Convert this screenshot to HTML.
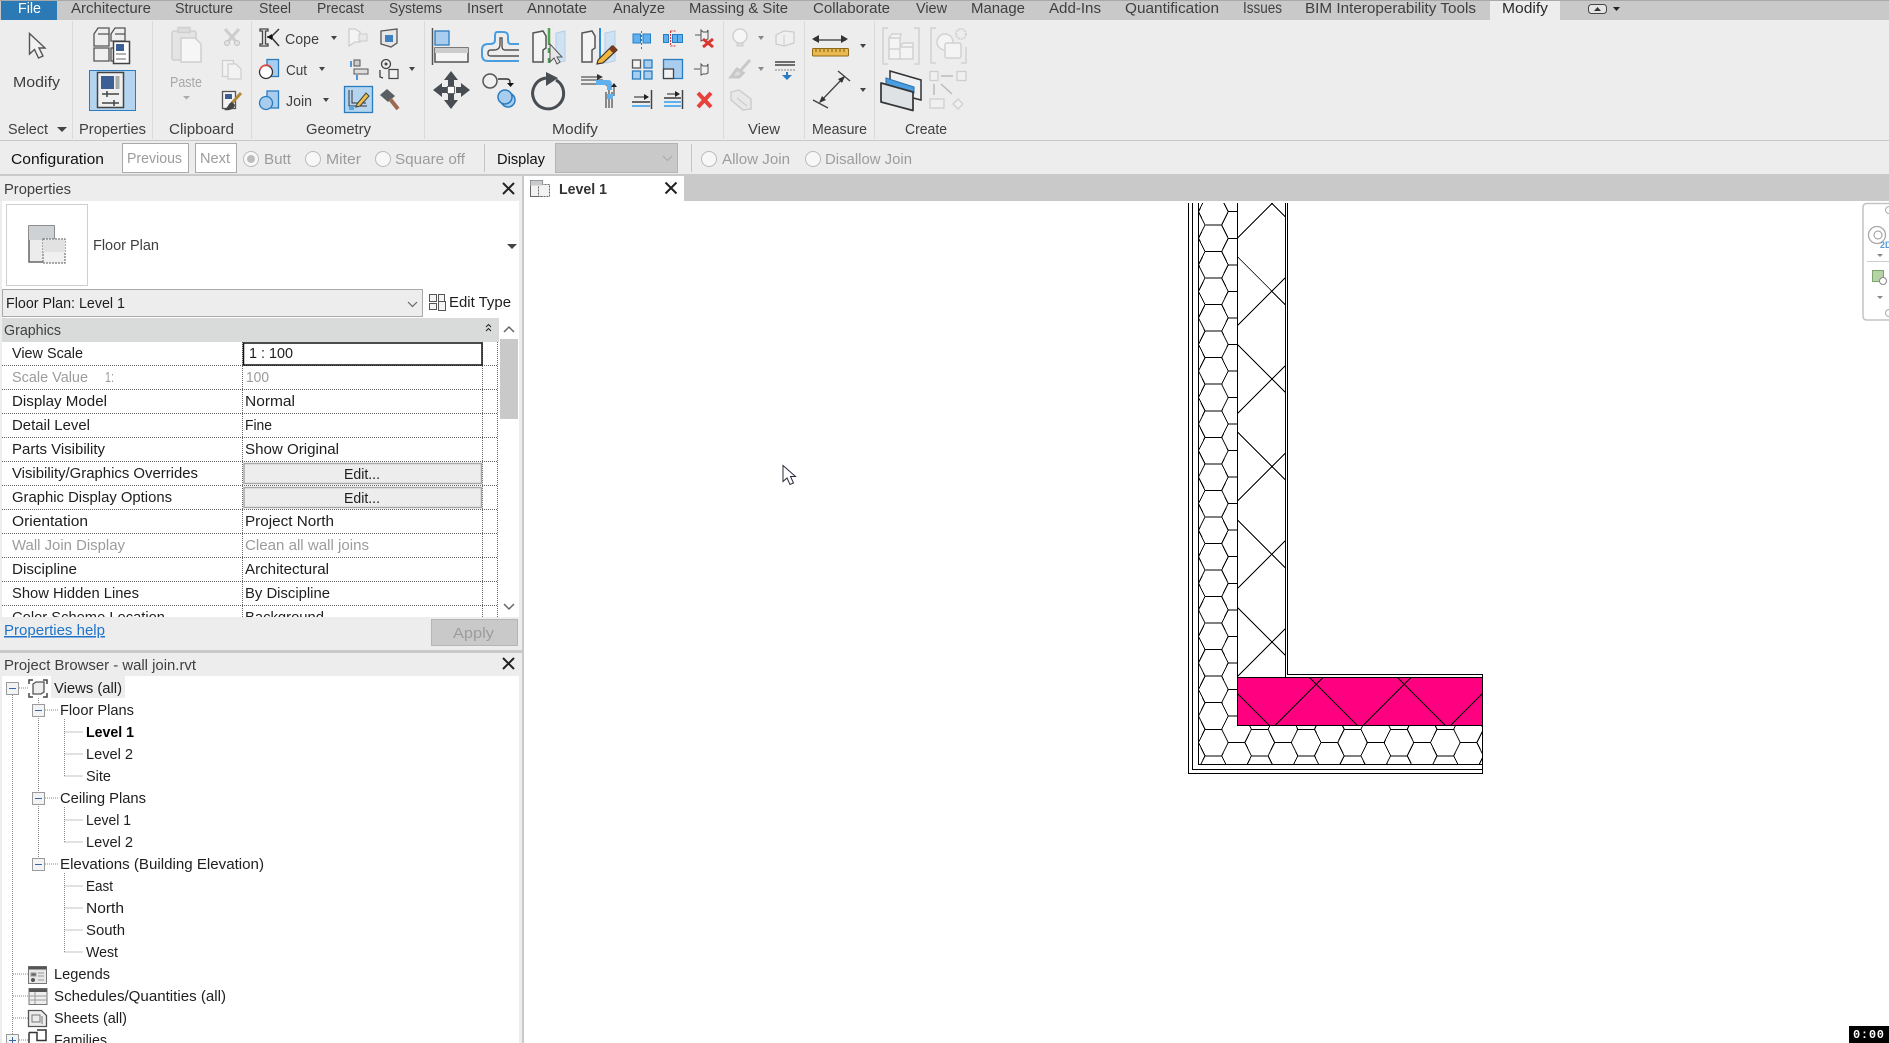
<!DOCTYPE html>
<html><head><meta charset="utf-8"><title>Revit</title>
<style>
html,body{margin:0;padding:0;background:#fff;overflow:hidden}
svg{display:block}
text{font-family:"Liberation Sans",Arial,sans-serif;font-size:15px;fill:#1e1e1e}
.t{fill:#3f3f3f}
.g{fill:#9c9c9c}
.d{fill:#a8a8a8}
.dot{stroke:#666;stroke-dasharray:1 1;stroke-width:1;shape-rendering:crispEdges;fill:none}
.tree{stroke:#888;stroke-dasharray:1 1;stroke-width:1;shape-rendering:crispEdges;fill:none}
.c{shape-rendering:crispEdges}
</style></head><body>
<svg width="1889" height="1043" viewBox="0 0 1889 1043" xmlns="http://www.w3.org/2000/svg">
<defs>
<clipPath id="hc"><path d="M1198.5 203H1237.5V725.3H1482V764.3H1198.5Z"/></clipPath>
<clipPath id="xc"><rect x="1237.5" y="203" width="48" height="474.3"/></clipPath>
<path id="tile" d="M0 0H16.7L23.2 13.27L16.7 26.54M23.2 13.27H39.9L46.4 0M39.9 13.27L46.4 26.54"/>
<g id="col">
<use href="#tile" y="171.92"/><use href="#tile" y="198.46"/><use href="#tile" y="225"/><use href="#tile" y="251.54"/><use href="#tile" y="278.08"/><use href="#tile" y="304.62"/><use href="#tile" y="331.16"/><use href="#tile" y="357.7"/><use href="#tile" y="384.24"/><use href="#tile" y="410.78"/><use href="#tile" y="437.32"/><use href="#tile" y="463.86"/><use href="#tile" y="490.4"/><use href="#tile" y="516.94"/><use href="#tile" y="543.48"/><use href="#tile" y="570.02"/><use href="#tile" y="596.56"/><use href="#tile" y="623.1"/><use href="#tile" y="649.64"/><use href="#tile" y="676.18"/><use href="#tile" y="702.72"/><use href="#tile" y="729.26"/><use href="#tile" y="755.8"/>
</g>
</defs>

<!-- base -->
<rect width="1889" height="1043" fill="#fff"/>
<rect y="0" width="1889" height="20" fill="#c9c9c9"/>
<rect y="0" width="1889" height="1" fill="#a9a9a9"/>
<rect x="1" y="1" width="56" height="19" fill="#2b7ab5"/>
<rect x="1490" y="1" width="70" height="19" fill="#ededed"/>
<rect y="20" width="1889" height="120" fill="#ededed"/>
<rect y="140" width="1889" height="1" fill="#c9c9c9"/>
<rect y="141" width="1889" height="33" fill="#ededed"/>
<rect y="174" width="1889" height="27" fill="#c9c9c9"/>
<rect x="0" y="176" width="522" height="867" fill="#ededed"/>
<rect x="522" y="176" width="2" height="867" fill="#c9c9c9"/>
<rect x="524" y="176" width="160" height="25" fill="#fff"/>

<!-- ribbon tabs -->
<g class="t">
<text x="18" y="13" textLength="23" lengthAdjust="spacingAndGlyphs" style="fill:#fff">File</text>
<text class="t" x="71" y="13" textLength="80" lengthAdjust="spacingAndGlyphs">Architecture</text>
<text class="t" x="175" y="13" textLength="58" lengthAdjust="spacingAndGlyphs">Structure</text>
<text class="t" x="259" y="13" textLength="32" lengthAdjust="spacingAndGlyphs">Steel</text>
<text class="t" x="317" y="13" textLength="47" lengthAdjust="spacingAndGlyphs">Precast</text>
<text class="t" x="389" y="13" textLength="53" lengthAdjust="spacingAndGlyphs">Systems</text>
<text class="t" x="467" y="13" textLength="36" lengthAdjust="spacingAndGlyphs">Insert</text>
<text class="t" x="527" y="13" textLength="60" lengthAdjust="spacingAndGlyphs">Annotate</text>
<text class="t" x="613" y="13" textLength="52" lengthAdjust="spacingAndGlyphs">Analyze</text>
<text class="t" x="689" y="13" textLength="99" lengthAdjust="spacingAndGlyphs">Massing &amp; Site</text>
<text class="t" x="813" y="13" textLength="77" lengthAdjust="spacingAndGlyphs">Collaborate</text>
<text class="t" x="916" y="13" textLength="31" lengthAdjust="spacingAndGlyphs">View</text>
<text class="t" x="971" y="13" textLength="54" lengthAdjust="spacingAndGlyphs">Manage</text>
<text class="t" x="1049" y="13" textLength="52" lengthAdjust="spacingAndGlyphs">Add-Ins</text>
<text class="t" x="1125" y="13" textLength="94" lengthAdjust="spacingAndGlyphs">Quantification</text>
<text class="t" x="1243" y="13" textLength="39" lengthAdjust="spacingAndGlyphs" style="font-size:16px">Issues</text>
<text class="t" x="1305" y="13" textLength="171" lengthAdjust="spacingAndGlyphs">BIM Interoperability Tools</text>
<text x="1502" y="13" textLength="46" lengthAdjust="spacingAndGlyphs" style="fill:#2a2a2a">Modify</text>
</g>
<rect x="1588.5" y="4.5" width="18" height="9" rx="3" fill="#e4e4e4" stroke="#444"/>
<path d="M1594 11l3.5-4 3.5 4z" fill="#333"/>
<path d="M1613 7h7l-3.5 4z" fill="#222"/>

<!-- panel separators -->
<g fill="#dadada" class="c">
<rect x="72" y="21" width="1" height="118"/><rect x="152" y="21" width="1" height="118"/><rect x="251" y="21" width="1" height="118"/><rect x="424" y="21" width="1" height="118"/><rect x="723" y="21" width="1" height="118"/><rect x="804" y="21" width="1" height="118"/><rect x="874" y="21" width="1" height="118"/>
</g>

<!-- panel labels -->
<text class="t" x="8" y="134" textLength="40" lengthAdjust="spacingAndGlyphs">Select</text>
<path d="M57 127h10l-5 5z" fill="#444"/>
<text class="t" x="79" y="134" textLength="67" lengthAdjust="spacingAndGlyphs">Properties</text>
<text class="t" x="169" y="134" textLength="65" lengthAdjust="spacingAndGlyphs">Clipboard</text>
<text class="t" x="306" y="134" textLength="65" lengthAdjust="spacingAndGlyphs">Geometry</text>
<text class="t" x="552" y="134" textLength="46" lengthAdjust="spacingAndGlyphs">Modify</text>
<text class="t" x="748" y="134" textLength="32" lengthAdjust="spacingAndGlyphs">View</text>
<text class="t" x="812" y="134" textLength="55" lengthAdjust="spacingAndGlyphs">Measure</text>
<text class="t" x="905" y="134" textLength="42" lengthAdjust="spacingAndGlyphs">Create</text>
<text class="t" x="13" y="87" textLength="47" lengthAdjust="spacingAndGlyphs">Modify</text>
<text class="d" x="170" y="87" textLength="32" lengthAdjust="spacingAndGlyphs">Paste</text>
<path d="M183 96h7l-3.500 3.500z" fill="#aaa"/>
<text class="t" x="285" y="44" textLength="34" lengthAdjust="spacingAndGlyphs">Cope</text>
<text class="t" x="286" y="75" textLength="21" lengthAdjust="spacingAndGlyphs">Cut</text>
<text class="t" x="286" y="106" textLength="26" lengthAdjust="spacingAndGlyphs">Join</text>
<g fill="#444">
<path d="M331 36h6l-3 4z"/><path d="M319 67h6l-3 4z"/><path d="M323 98h6l-3 4z"/><path d="M409 67h6l-3 4z"/>
<path d="M860 44h6l-3 4z"/><path d="M860 88h6l-3 4z"/>
</g>
<g fill="#888"><path d="M758 36h6l-3 4z"/><path d="M758 67h6l-3 4z"/></g>

<!-- Select cursor -->
<path d="M29.500 33.500V54L34.500 49.500L38.500 58L43 56L39 48H45Z" fill="#f2f2f2" stroke="#555" stroke-width="1.400"/>

<!-- Family types icon -->
<g stroke="#555" stroke-width="1.300" fill="#efefef">
<path d="M94 34l4-6h11v18h-15z"/><path d="M111 34l4-6h10v13h-14z"/><path d="M94 48h15v13h-15z"/><path d="M111 48h3v13h-3z"/>
<path d="M98 34h11M115 34h10"/>
</g>
<rect x="113.500" y="41.500" width="16" height="22" fill="#fff" stroke="#444" stroke-width="1.500"/>
<rect x="116" y="44" width="8" height="7" fill="#3b5f94"/>
<path d="M116 54h10M116 59h10" stroke="#666" fill="none"/>
<!-- Selected properties button -->
<rect x="89.500" y="70.500" width="46" height="40" fill="#b4d4ef" stroke="#2a7cc0"/>
<rect x="97.500" y="72.500" width="26" height="35" fill="#f0f0f0" stroke="#444" stroke-width="1.500"/>
<rect x="101" y="76" width="13" height="13" fill="#3b5f94"/>
<rect x="115.500" y="76" width="4" height="13" fill="#aaa"/>
<path d="M102 94h17M107 91v6M102 103h17M114 100v6" stroke="#444" stroke-width="1.500" fill="none"/>

<!-- Clipboard group -->
<g stroke="#cfcfcf" stroke-width="1.500" fill="#e4e4e4">
<rect x="172" y="31" width="24" height="29" rx="2"/>
<rect x="178" y="27.500" width="12" height="5" fill="#ddd"/>
<path d="M181 38h14l6 6v18h-20z" fill="#f6f6f6"/>
</g>
<g stroke="#cdcdcd" stroke-width="3" fill="none"><path d="M225 29l14 16M239 29l-14 16"/></g>
<circle cx="227" cy="43" r="2.500" fill="#e2e2e2" stroke="#c4c4c4"/><circle cx="237" cy="43" r="2.500" fill="#e2e2e2" stroke="#c4c4c4"/>
<g stroke="#cfcfcf" stroke-width="1.300" fill="#f2f2f2"><rect x="222.500" y="60.500" width="11" height="16"/><path d="M228 64h8l5 5v10h-13z"/></g>
<rect x="222.500" y="91.500" width="13" height="17" fill="#f4f4f4" stroke="#555" stroke-width="1.300"/>
<rect x="225" y="94" width="7" height="5" fill="#3b5f94"/>
<path d="M241 93L232 103" stroke="#b38a3c" stroke-width="3"/>
<path d="M232 102c-4 1-3 5-8 8c6 1 10-1 11-5z" fill="#444"/>

<!-- Geometry icons -->
<path d="M260 29h8v2h-2.500v13h2.500v2h-8v-2h2.500v-13h-2.500z" fill="#e8e8e8" stroke="#444" stroke-width="1.300"/>
<path d="M279 29l-8 8 8 9M267 37h6" fill="none" stroke="#333" stroke-width="1.500"/>
<path d="M267 37l5-3v6z" fill="#111"/>
<rect x="267" y="59.500" width="11.500" height="17" fill="#a8cdee" stroke="#2a7cc0" stroke-width="1.300"/>
<circle cx="266" cy="72" r="6.500" fill="#fff" stroke="#333" stroke-width="1.300"/>
<path d="M260 70a6.500 6.500 0 0 1 11-3" stroke="#e04a4a" stroke-width="1.500" fill="none"/>
<rect x="267" y="91" width="11.500" height="17" fill="#a8cdee" stroke="#2a7cc0" stroke-width="1.300"/>
<circle cx="266" cy="103" r="6.500" fill="#a8cdee" stroke="#2a7cc0" stroke-width="1.300"/>
<path d="M349 29h6l5 3v10h-5l-6 4z" fill="#f4f4f4" stroke="#ccc" stroke-width="1.300"/>
<path d="M359 34h8v7h-8z" fill="#e8e8e8" stroke="#ccc"/>
<path d="M381 31l16-2v14l-6 4-10-3z" fill="#e6e6e6" stroke="#555" stroke-width="1.300"/>
<rect x="385" y="35" width="8" height="7" fill="#3e80c0"/>
<rect x="354" y="60" width="6" height="6" fill="#ccc" stroke="#555"/>
<rect x="354" y="69" width="14" height="5" fill="#ddd" stroke="#555"/>
<path d="M351 61v6M357 75v5" stroke="#1e78c8" stroke-width="1.500"/>
<circle cx="386" cy="64" r="4.500" fill="#eee" stroke="#444" stroke-width="1.300"/><circle cx="386" cy="64" r="1.500" fill="#444"/>
<rect x="389" y="69.500" width="9" height="9" fill="#f0f0f0" stroke="#444" stroke-width="1.200"/>
<path d="M380 70v7l3 1" fill="none" stroke="#333" stroke-width="1.200"/>
<rect x="344.500" y="86.500" width="28" height="26" fill="#b4d4ef" stroke="#2a7cc0" stroke-width="1.300"/>
<path d="M349 90v16h18M352 90v13h14" fill="none" stroke="#333"/>
<path d="M349 106h5v4h-5z" fill="#5aa5e0"/>
<path d="M357 104l9-11 3 3-9 10-4 1z" fill="#f0c14a" stroke="#444"/>
<path d="M380 95l7-6 8 7-7 6z" fill="#5a5f63"/>
<path d="M390 99l8 10" stroke="#9c6a52" stroke-width="4"/>

<!-- Modify large icons -->
<path d="M432.500 28v37" stroke="#555" stroke-width="1.500"/>
<rect x="435" y="31" width="14" height="14" fill="#a8cdee" stroke="#2a7cc0" stroke-width="1.300"/>
<rect x="435" y="48" width="33" height="14" fill="#f4f4f4" stroke="#555" stroke-width="1.500"/>
<rect x="435" y="48" width="33" height="5" fill="#ccc"/>
<path d="M519 44H511Q508 44 508 40V36Q508 32 503 32H497Q495 32 495 36V40Q495 44 490 44H488Q482 44 482 50V55Q482 61 488 61H519" fill="none" stroke="#4a9ee0" stroke-width="2"/>
<path d="M519 50H505Q502 50 502 46V38H500V44Q500 50 494 50H491Q488 50 488 53V54Q488 56 491 56H519" fill="none" stroke="#555" stroke-width="1.400"/>
<path d="M533 33l10-2 3 5v12l-3 2v12h-10z" fill="#f4f4f4" stroke="#555" stroke-width="1.500"/>
<path d="M556 33l9-2v30l-9 2z" fill="#cfe2f3" stroke="#b5cfe6"/>
<path d="M549 28v17M549 48v5M549 58v5" stroke="#4ea34e" stroke-width="2.500"/>
<path d="M550 44v18l4-4 3 6 3-2-3-5h5z" fill="#e6e6e6" stroke="#555"/>
<path d="M582 33l10-2 3 5v12l-3 2v12h-10z" fill="#f4f4f4" stroke="#555" stroke-width="1.500"/>
<path d="M600 28v34" stroke="#2d8ed8" stroke-width="2"/>
<path d="M605 33l10-2v30l-10 2z" fill="#cfe2f3" stroke="#b5cfe6"/>
<path d="M598 60l14-14 5 4-14 13-6 1z" fill="#f0b83c" stroke="#433" stroke-width="1.200"/>
<path d="M609 49l4-4 4 4-4 4z" fill="#7a3b1a"/>
<!-- move -->
<g fill="#474d52">
<path d="M451 71l7 9h-4v7h-6v-7h-4z"/><path d="M451 109l7-9h-4v-7h-6v7h-4z"/>
<path d="M433 90l9-7v4h5v6h-5v4z"/><path d="M470 90l-9-7v4h-5v6h5v4z"/>
</g>
<rect x="447.500" y="86.500" width="7" height="7" fill="#fff" stroke="#666"/>
<!-- copy -->
<circle cx="490" cy="81" r="7" fill="#f0f0f0" stroke="#555" stroke-width="1.500"/>
<path d="M498 79h9c3 0 3 2 3 5" fill="none" stroke="#333" stroke-width="1.500"/><path d="M507 83h7l-3.500 4z" fill="#111"/>
<circle cx="508" cy="100" r="7" fill="#a8cdee" stroke="#2a7cc0" stroke-width="1.500"/>
<circle cx="505" cy="97" r="7" fill="#a8cdee" stroke="#2a7cc0" stroke-width="1.500"/>
<!-- rotate -->
<path d="M546 78a15.500 15.500 0 1 0 10 2" fill="none" stroke="#474d52" stroke-width="3"/>
<path d="M546 72v14l12-8z" fill="#474d52"/>
<!-- trim -->
<path d="M581 77h16M581 84h20c3 0 8 0 8 6v18M581 80h22" fill="none" stroke="#555" stroke-width="1.300"/>
<path d="M597 74l6 3-6 3z" fill="#333"/>
<path d="M596 80h12c3 0 4 2 4 5v5h-5v-5h-11z" fill="#5eb0ee"/>
<path d="M606 92v16M612 92v16" stroke="#666" stroke-width="1.500"/>
<path d="M607 94h6v5h-6z" fill="#5eb0ee"/>
<path d="M614 96v-11" stroke="#333"/><path d="M611 87l3-4 3 4z" fill="#222"/>

<!-- Modify small icons -->
<g>
<rect x="633" y="34" width="7.500" height="9" fill="#5eb0ee" stroke="#2a7cc0"/><rect x="643" y="34" width="7.500" height="9" fill="#5eb0ee" stroke="#2a7cc0"/>
<path d="M641.500 31v18" stroke="#d33" stroke-dasharray="2 2"/>
<rect x="663.500" y="34.500" width="5" height="8" fill="#5eb0ee" stroke="#2a7cc0"/><rect x="672.500" y="34.500" width="5" height="8" fill="#5eb0ee" stroke="#2a7cc0"/><rect x="677.500" y="34.500" width="5" height="8" fill="#5eb0ee" stroke="#2a7cc0"/>
<path d="M670.500 31v15M670.500 31h5M670.500 46h5" stroke="#d33" fill="none" stroke-dasharray="2 1"/>
<path d="M695 35h6M701 30l2 2h4l1-2v9l-2 1h-3l-2 1z" fill="#f0f0f0" stroke="#555"/>
<path d="M703 39l10 8M713 39l-10 8" stroke="#d9362f" stroke-width="3"/>
<g fill="#a8cdee" stroke="#2a7cc0" stroke-width="1.300">
<rect x="632.500" y="60" width="8" height="8" fill="#f3f3f3" stroke="#555"/><rect x="644" y="60" width="8" height="8"/><rect x="632.500" y="71" width="8" height="8"/><rect x="644" y="71" width="8" height="8"/>
<rect x="663.500" y="59.500" width="19" height="19"/>
<rect x="663.500" y="69" width="10" height="9.500" fill="#f3f3f3" stroke="#444"/>
</g>
<path d="M694 69h6M701 64l2 2h4l1-2v9l-2 1h-3l-2 1z" fill="#f0f0f0" stroke="#555"/>
<path d="M651.500 90v19" stroke="#444" stroke-width="1.500"/>
<path d="M632 102h18" stroke="#666" stroke-width="2"/>
<path d="M634 97h14" stroke="#444" stroke-width="1.200"/><path d="M644 94l5 3-5 3z" fill="#222"/>
<path d="M632 106h18" stroke="#5eb0ee" stroke-width="2"/>
<path d="M682.500 90v19" stroke="#444" stroke-width="1.500"/>
<path d="M664 98h17" stroke="#666" stroke-width="2"/><path d="M664 102h17" stroke="#5eb0ee" stroke-width="2"/><path d="M664 106h17" stroke="#5eb0ee" stroke-width="2"/>
<path d="M667 94h11" stroke="#444" stroke-width="1.200"/><path d="M675 91l5 3-5 3z" fill="#222"/>
<path d="M698 93l13 14M711 93l-13 14" stroke="#e8403a" stroke-width="4"/>
</g>

<!-- View panel -->
<circle cx="740" cy="36" r="7" fill="#f6f6f6" stroke="#ccc" stroke-width="1.300"/>
<path d="M737 43h6v3h-6z" fill="#ddd" stroke="#ccc"/>
<path d="M776 35l8-4 10 1v11l-10 3-8-2z" fill="#f0f0f0" stroke="#ccc" stroke-width="1.200"/><path d="M784 35v11" stroke="#ccc"/>
<path d="M731 77l6-8 6 4-4 4zM741 70l9-10" stroke="#c8c8c8" stroke-width="3" fill="#ddd"/>
<path d="M775 62h20M775 65h20" stroke="#444" stroke-width="1.500"/><path d="M775 70h20" stroke="#888" stroke-dasharray="2 1"/>
<path d="M786 72v3h-4l5 5 5-5h-4v-3z" fill="#2a7cc0"/>
<path d="M731 92l8-2 12 9v10l-8 1-12-10z" fill="#e8e8e8" stroke="#ccc" stroke-width="1.400"/><path d="M737 98l10 8" stroke="#ccc" stroke-width="1.200"/>

<!-- Measure panel -->
<path d="M814 40h32" stroke="#333" stroke-width="1.300"/>
<path d="M812 39l7-4v8zM848 39l-7-4v8z" fill="#333"/>
<rect x="812.500" y="48.500" width="36" height="7.500" rx="1" fill="#eaba4e" stroke="#8d6a1a"/>
<path d="M816 49v3M820 49v3M824 49v3M828 49v3M832 49v3M836 49v3M840 49v3M844 49v3" stroke="#7a5c16"/>
<path d="M813 100l15 8M838 71l12 10" stroke="#444" stroke-width="1.400" fill="none"/>
<path d="M820 102l24-25" stroke="#444" stroke-width="1.300"/><path d="M819 103l3-7 4 4zM845 76l-3 7-4-4z" fill="#333"/>

<!-- Create panel -->
<g fill="none" stroke="#d2d2d2" stroke-width="1.500">
<path d="M888 28h-5v36h5M914 28h5v36h-5"/>
<path d="M889 38h11v11h-11zM889 49h11v10h-11zM900 47h13v12h-13zM889 38l3-4h9l-1 4M900 47l3-4h10v4" fill="#f4f4f4"/>
<path d="M936 28h-5v35h5M961 63h5v-16"/>
<circle cx="945" cy="42" r="8" fill="#f4f4f4"/>
<rect x="945" y="43" width="16" height="15" fill="#f4f4f4" rx="2"/>
<circle cx="961" cy="34" r="5" stroke-dasharray="2 1" stroke-width="2"/>
</g>
<path d="M890 71L921 80V100L890 92Z" fill="#eef0f2" stroke="#333" stroke-width="1.500"/>
<path d="M886 78L914 87V93L886 85Z" fill="#4a9ee0" stroke="#2a6eaa"/>
<path d="M881 83L913 92V110.500L881 102Z" fill="#dfe2e5" stroke="#333" stroke-width="1.700" stroke-linejoin="round"/>
<g fill="#f0f0f0" stroke="#cfcfcf" stroke-width="1.300">
<rect x="930" y="71.500" width="8" height="9"/><rect x="957" y="71.500" width="9" height="9"/><rect x="930" y="99" width="14" height="9"/>
<path d="M958 99l5 5-5 5-5-5z"/>
</g>
<path d="M941 76h12M934 84v11M941 84l11 10" stroke="#bbb" stroke-width="1.500" fill="none"/>

<!-- Options bar -->
<text x="11" y="164" textLength="93" lengthAdjust="spacingAndGlyphs" style="fill:#111">Configuration</text>
<rect x="122.500" y="143.500" width="66" height="29" fill="#fff" stroke="#aaa"/>
<text class="g" x="127" y="163" textLength="55" lengthAdjust="spacingAndGlyphs">Previous</text>
<rect x="195.500" y="143.500" width="41" height="29" fill="#fff" stroke="#aaa"/>
<text class="g" x="200" y="163" textLength="30" lengthAdjust="spacingAndGlyphs">Next</text>
<g fill="#f7f7f7" stroke="#bbb">
<circle cx="251" cy="159" r="7.500"/><circle cx="313" cy="159" r="7.500"/><circle cx="383" cy="159" r="7.500"/><circle cx="709" cy="159" r="7.500"/><circle cx="813" cy="159" r="7.500"/>
</g>
<circle cx="251" cy="159" r="4" fill="#bdbdbd"/>
<text class="g" x="264" y="164" textLength="27" lengthAdjust="spacingAndGlyphs">Butt</text>
<text class="g" x="326" y="164" textLength="35" lengthAdjust="spacingAndGlyphs">Miter</text>
<text class="g" x="395" y="164" textLength="70" lengthAdjust="spacingAndGlyphs">Square off</text>
<rect x="484" y="144" width="1" height="28" fill="#c4c4c4"/>
<text x="497" y="164" textLength="48" lengthAdjust="spacingAndGlyphs" style="fill:#111">Display</text>
<rect x="555.500" y="143.500" width="122" height="29" fill="#c9c9c9" stroke="#b4b4b4"/>
<path d="M663 156l4.500 4.500 4.500-4.500" fill="none" stroke="#aaa"/>
<rect x="691" y="144" width="1" height="28" fill="#c4c4c4"/>
<text class="g" x="722" y="164" textLength="68" lengthAdjust="spacingAndGlyphs">Allow Join</text>
<text class="g" x="825" y="164" textLength="87" lengthAdjust="spacingAndGlyphs">Disallow Join</text>

<!-- Properties palette -->
<text class="t" x="4" y="194" textLength="67" lengthAdjust="spacingAndGlyphs">Properties</text>
<path d="M503 183l11 11M514 183l-11 11" stroke="#222" stroke-width="2"/>
<rect x="2" y="201" width="517" height="416" fill="#fff"/>
<rect x="6.500" y="204.500" width="81" height="81" fill="#fff" stroke="#cfcfcf"/>
<rect x="29" y="226" width="25" height="36" fill="#ececec" stroke="#666" stroke-width="1.500"/>
<rect x="29" y="226" width="25" height="14" fill="#cfd2d4"/>
<rect x="43" y="239" width="22" height="24" fill="#f0f0f0" stroke="#777" stroke-width="1.200" stroke-dasharray="2 1"/>
<rect x="43" y="240" width="22" height="12" fill="#e2e2e2"/>
<text class="t" x="93" y="250" textLength="66" lengthAdjust="spacingAndGlyphs">Floor Plan</text>
<path d="M507 244h10l-5 5z" fill="#444"/>
<rect x="2.500" y="289.500" width="420" height="27" fill="#ededed" stroke="#aaa"/>
<text x="6" y="308" textLength="119" lengthAdjust="spacingAndGlyphs">Floor Plan: Level 1</text>
<path d="M408 302l4.500 4.500 4.500-4.500" fill="none" stroke="#666" stroke-width="1.200"/>
<rect x="423" y="288" width="96" height="29" fill="#fff"/>
<g fill="#f4f4f4" stroke="#555">
<rect x="429.500" y="294.500" width="7" height="7"/><rect x="438.500" y="294.500" width="6" height="7"/><rect x="429.500" y="303.500" width="7" height="6"/>
<rect x="438.500" y="301.500" width="7" height="9"/>
</g>
<text x="449" y="307" textLength="62" lengthAdjust="spacingAndGlyphs">Edit Type</text>

<rect x="2" y="318" width="497" height="24" fill="#d9dbdb"/>
<text class="t" x="4" y="335" textLength="57" lengthAdjust="spacingAndGlyphs">Graphics</text>
<path d="M486 327l2.500-2.500 2.500 2.500M486 331l2.500-2.500 2.500 2.500" fill="none" stroke="#222"/>
<path d="M504 332l5-5 5 5" fill="none" stroke="#666" stroke-width="1.500"/>
<rect x="500" y="339" width="18" height="80" fill="#c9c9c9"/>
<path d="M504 604l5 5 5-5" fill="none" stroke="#666" stroke-width="1.500"/>

<!-- grid lines -->
<path class="dot" d="M2 365.500H498M2 389.500H498M2 413.500H498M2 437.500H498M2 461.500H498M2 485.500H498M2 509.500H498M2 533.500H498M2 557.500H498M2 581.500H498M2 605.500H498M242.500 342V617M482.500 342V617M497.500 342V617"/>

<!-- rows -->
<text x="12" y="358" textLength="71" lengthAdjust="spacingAndGlyphs">View Scale</text>
<text class="g" x="12" y="382" textLength="76" lengthAdjust="spacingAndGlyphs">Scale Value</text>
<text class="g" x="105" y="382" textLength="9" lengthAdjust="spacingAndGlyphs">1:</text>
<text x="12" y="406" textLength="95" lengthAdjust="spacingAndGlyphs">Display Model</text>
<text x="12" y="430" textLength="78" lengthAdjust="spacingAndGlyphs">Detail Level</text>
<text x="12" y="454" textLength="93" lengthAdjust="spacingAndGlyphs">Parts Visibility</text>
<text x="12" y="478" textLength="186" lengthAdjust="spacingAndGlyphs">Visibility/Graphics Overrides</text>
<text x="12" y="502" textLength="160" lengthAdjust="spacingAndGlyphs">Graphic Display Options</text>
<text x="12" y="526" textLength="76" lengthAdjust="spacingAndGlyphs">Orientation</text>
<text class="g" x="12" y="550" textLength="113" lengthAdjust="spacingAndGlyphs">Wall Join Display</text>
<text x="12" y="574" textLength="65" lengthAdjust="spacingAndGlyphs">Discipline</text>
<text x="12" y="598" textLength="127" lengthAdjust="spacingAndGlyphs">Show Hidden Lines</text>
<text x="12" y="622" textLength="153" lengthAdjust="spacingAndGlyphs">Color Scheme Location</text>

<rect x="243.500" y="343" width="238.500" height="22" fill="#fff" stroke="#111" stroke-width="1.500"/>
<text x="249" y="358" textLength="44" lengthAdjust="spacingAndGlyphs">1 : 100</text>
<text class="g" x="246" y="382" textLength="23" lengthAdjust="spacingAndGlyphs">100</text>
<text x="245" y="406" textLength="50" lengthAdjust="spacingAndGlyphs">Normal</text>
<text x="245" y="430" textLength="27" lengthAdjust="spacingAndGlyphs">Fine</text>
<text x="245" y="454" textLength="94" lengthAdjust="spacingAndGlyphs">Show Original</text>
<rect x="244" y="463.500" width="237.500" height="20" fill="#ededed" stroke="#a8a8a8" stroke-width="1.500"/>
<text x="344" y="479" textLength="36" lengthAdjust="spacingAndGlyphs">Edit...</text>
<rect x="244" y="487.500" width="237.500" height="20" fill="#ededed" stroke="#a8a8a8" stroke-width="1.500"/>
<text x="344" y="503" textLength="36" lengthAdjust="spacingAndGlyphs">Edit...</text>
<text x="245" y="526" textLength="89" lengthAdjust="spacingAndGlyphs">Project North</text>
<text class="g" x="245" y="550" textLength="124" lengthAdjust="spacingAndGlyphs">Clean all wall joins</text>
<text x="245" y="574" textLength="84" lengthAdjust="spacingAndGlyphs">Architectural</text>
<text x="245" y="598" textLength="85" lengthAdjust="spacingAndGlyphs">By Discipline</text>
<text x="245" y="622" textLength="79" lengthAdjust="spacingAndGlyphs">Background</text>

<!-- footer -->
<rect x="0" y="617" width="522" height="33" fill="#ededed"/>
<text x="4" y="635" textLength="101" lengthAdjust="spacingAndGlyphs" style="fill:#1f74c9;text-decoration:underline">Properties help</text>
<rect x="431.500" y="619.500" width="86" height="26" fill="#c9c9c9" stroke="#b5b5b5"/>
<text class="g" x="453" y="638" textLength="41" lengthAdjust="spacingAndGlyphs">Apply</text>
<rect x="0" y="650" width="522" height="3" fill="#c9c9c9"/>

<!-- Project Browser -->
<text class="t" x="4" y="670" textLength="192" lengthAdjust="spacingAndGlyphs">Project Browser - wall join.rvt</text>
<path d="M503 658l11 11M514 658l-11 11" stroke="#222" stroke-width="2"/>
<rect x="2" y="676" width="517" height="367" fill="#fff"/>
<rect x="51" y="676" width="74" height="22" fill="#ededed"/>

<path class="tree" d="M12.500 695V1035M38.500 698V860M64.500 719V776M64.500 807V842M64.500 873V952M19 688H29M45 710H58M64.500 732H83M64.500 754H83M64.500 776H83M45 798H58M64.500 820H83M64.500 842H83M45 864H58M64.500 886H83M64.500 908H83M64.500 930H83M64.500 952H83M13 974H29M13 996H29M13 1018H29M19 1040H29"/>

<g fill="#f1f3f4" stroke="#9a9a9a">
<rect x="6.500" y="682.500" width="12" height="12"/><rect x="32.500" y="704.500" width="12" height="12"/><rect x="32.500" y="792.500" width="12" height="12"/><rect x="32.500" y="858.500" width="12" height="12"/><rect x="6.500" y="1034.500" width="12" height="12"/>
</g>
<path d="M9 688.500h7M35 710.500h7M35 798.500h7M35 864.500h7M9 1040.500h7M12.500 1037v7" stroke="#3a66a8" fill="none" class="c"/>

<!-- tree icons -->
<path d="M29 684v-4h4M43 680h4v4M47 693v4h-4M33 697h-4v-4" fill="none" stroke="#444" stroke-width="1.500"/>
<path d="M33 684l3-2h8v10l-3 2h-8z" fill="#eee" stroke="#555" stroke-width="1.300"/>
<rect x="28.500" y="966.500" width="18" height="17" fill="#e8e8e8" stroke="#777"/><rect x="28.500" y="966.500" width="18" height="3" fill="#555"/>
<path d="M31 973h5v3h-5zM38 973h6M38 976h6M38 980h6" fill="#666" stroke="#999"/><circle cx="33" cy="980" r="2" fill="#555"/>
<rect x="29" y="988.500" width="18" height="16" fill="#eee" stroke="#777"/><rect x="29" y="988.500" width="18" height="3.500" fill="#555"/>
<path d="M29 996h18M29 1000h18M35 992v12" stroke="#999"/>
<path d="M28.500 1010.500h13l5 5v11h-18z" fill="#ececec" stroke="#555" stroke-width="1.300"/>
<path d="M32 1015h8v7h-8zM42 1016v8" fill="none" stroke="#777"/>
<path d="M29 1032.500h8v8h9v-8" fill="none" stroke="#333" stroke-width="1.500"/><path d="M29 1032.500v10.500M37 1030h9v3" fill="none" stroke="#333" stroke-width="1.500"/>

<!-- tree text -->
<text x="54" y="693" textLength="68" lengthAdjust="spacingAndGlyphs">Views (all)</text>
<text x="60" y="715" textLength="74" lengthAdjust="spacingAndGlyphs">Floor Plans</text>
<text x="86" y="737" textLength="48" lengthAdjust="spacingAndGlyphs" style="font-weight:bold;fill:#000">Level 1</text>
<text x="86" y="759" textLength="47" lengthAdjust="spacingAndGlyphs">Level 2</text>
<text x="86" y="781" textLength="25" lengthAdjust="spacingAndGlyphs">Site</text>
<text x="60" y="803" textLength="86" lengthAdjust="spacingAndGlyphs">Ceiling Plans</text>
<text x="86" y="825" textLength="45" lengthAdjust="spacingAndGlyphs">Level 1</text>
<text x="86" y="847" textLength="47" lengthAdjust="spacingAndGlyphs">Level 2</text>
<text x="60" y="869" textLength="204" lengthAdjust="spacingAndGlyphs">Elevations (Building Elevation)</text>
<text x="86" y="891" textLength="27" lengthAdjust="spacingAndGlyphs">East</text>
<text x="86" y="913" textLength="38" lengthAdjust="spacingAndGlyphs">North</text>
<text x="86" y="935" textLength="39" lengthAdjust="spacingAndGlyphs">South</text>
<text x="86" y="957" textLength="32" lengthAdjust="spacingAndGlyphs">West</text>
<text x="54" y="979" textLength="56" lengthAdjust="spacingAndGlyphs">Legends</text>
<text x="54" y="1001" textLength="172" lengthAdjust="spacingAndGlyphs">Schedules/Quantities (all)</text>
<text x="54" y="1023" textLength="73" lengthAdjust="spacingAndGlyphs">Sheets (all)</text>
<text x="54" y="1045" textLength="53" lengthAdjust="spacingAndGlyphs">Families</text>

<!-- View tab -->
<g fill="#f2f2f2" stroke="#666">
<rect x="530.500" y="180.500" width="12" height="16"/><rect x="538.500" y="184.500" width="11" height="12" stroke-dasharray="2 1"/>
</g>
<rect x="530.500" y="180.500" width="12" height="5" fill="#c8cacc"/>
<text x="559" y="194" textLength="48" lengthAdjust="spacingAndGlyphs" style="font-weight:bold;fill:#333">Level 1</text>
<path d="M665.500 182.500l11 11M676.500 182.500l-11 11" stroke="#222" stroke-width="2"/>

<!-- Drawing -->
<g fill="none" stroke="#000" stroke-width="1" class="c">
<g clip-path="url(#hc)">
<use href="#col" x="1158.600"/><use href="#col" x="1205"/><use href="#col" x="1251.400"/><use href="#col" x="1297.800"/><use href="#col" x="1344.200"/><use href="#col" x="1390.600"/><use href="#col" x="1437"/>
</g>
<rect x="1237.500" y="677.500" width="245" height="48" fill="#ff0080"/>
<g clip-path="url(#xc)">
<path d="M1237.500 169.100L1285.500 217.100M1237.500 256.800L1285.500 304.800M1237.500 344.500L1285.500 392.500M1237.500 432.200L1285.500 480.200M1237.500 519.900L1285.500 567.900M1237.500 607.600L1285.500 655.600M1237.500 237.900L1285.500 189.900M1237.500 325.600L1285.500 277.600M1237.500 413.300L1285.500 365.300M1237.500 501L1285.500 453M1237.500 588.700L1285.500 540.700M1237.500 676.400L1285.500 628.400"/>
</g>
<path d="M1237.300 693.300L1269.300 725.300M1309.300 677.300L1357.300 725.300M1397.300 677.300L1445.300 725.300M1275.300 725.300L1323.300 677.300M1363.300 725.300L1411.300 677.300M1450.700 725.300L1482.300 693.700"/>
<path d="M1188.500 203V773.500H1482.500V674.500H1287.500V203M1192.500 203V769.500H1482.500M1198.500 203V764.500H1482.500M1237.500 203V677.500M1285.500 203V677.500"/>
</g>

<!-- Navigation bar -->
<path d="M1889 203.500H1867q-4 0-4 4V316q0 4 4 4H1889" fill="#fff" stroke="#c4c4c4" stroke-width="1.500"/>
<circle cx="1889" cy="210" r="3.500" fill="#fff" stroke="#aaa"/>
<circle cx="1877" cy="235" r="8.500" fill="#fff" stroke="#aaa" stroke-width="1.300"/><circle cx="1878" cy="235" r="4" fill="#fff" stroke="#999"/>
<text x="1880" y="248" style="font-size:9px;font-weight:bold;fill:#5b9bd5">2D</text>
<path d="M1877 254h6l-3 3z" fill="#888"/>
<rect x="1867" y="261" width="22" height="1" fill="#ccc"/>
<rect x="1872.500" y="270.500" width="11" height="11" fill="#b5d3a7" stroke="#7aa56c"/>
<circle cx="1883" cy="281" r="3.500" fill="#fff" stroke="#888"/>
<path d="M1877 296h6l-3 3z" fill="#888"/>
<circle cx="1889" cy="313" r="3.500" fill="#fff" stroke="#aaa"/>

<!-- Cursor -->
<path d="M783 465.500V481.500L787 478L790 484.500L793.500 483L790.500 476.500H795.500Z" fill="#fff" stroke="#2b2b3a" stroke-width="1"/>

<!-- Timer -->
<rect x="1849" y="1026" width="40" height="17" fill="#000"/>
<text x="1853" y="1038" textLength="31" style="font-family:'Liberation Mono',monospace;font-size:12px;font-weight:bold;fill:#fff">0:00</text>
</svg>
</body></html>
